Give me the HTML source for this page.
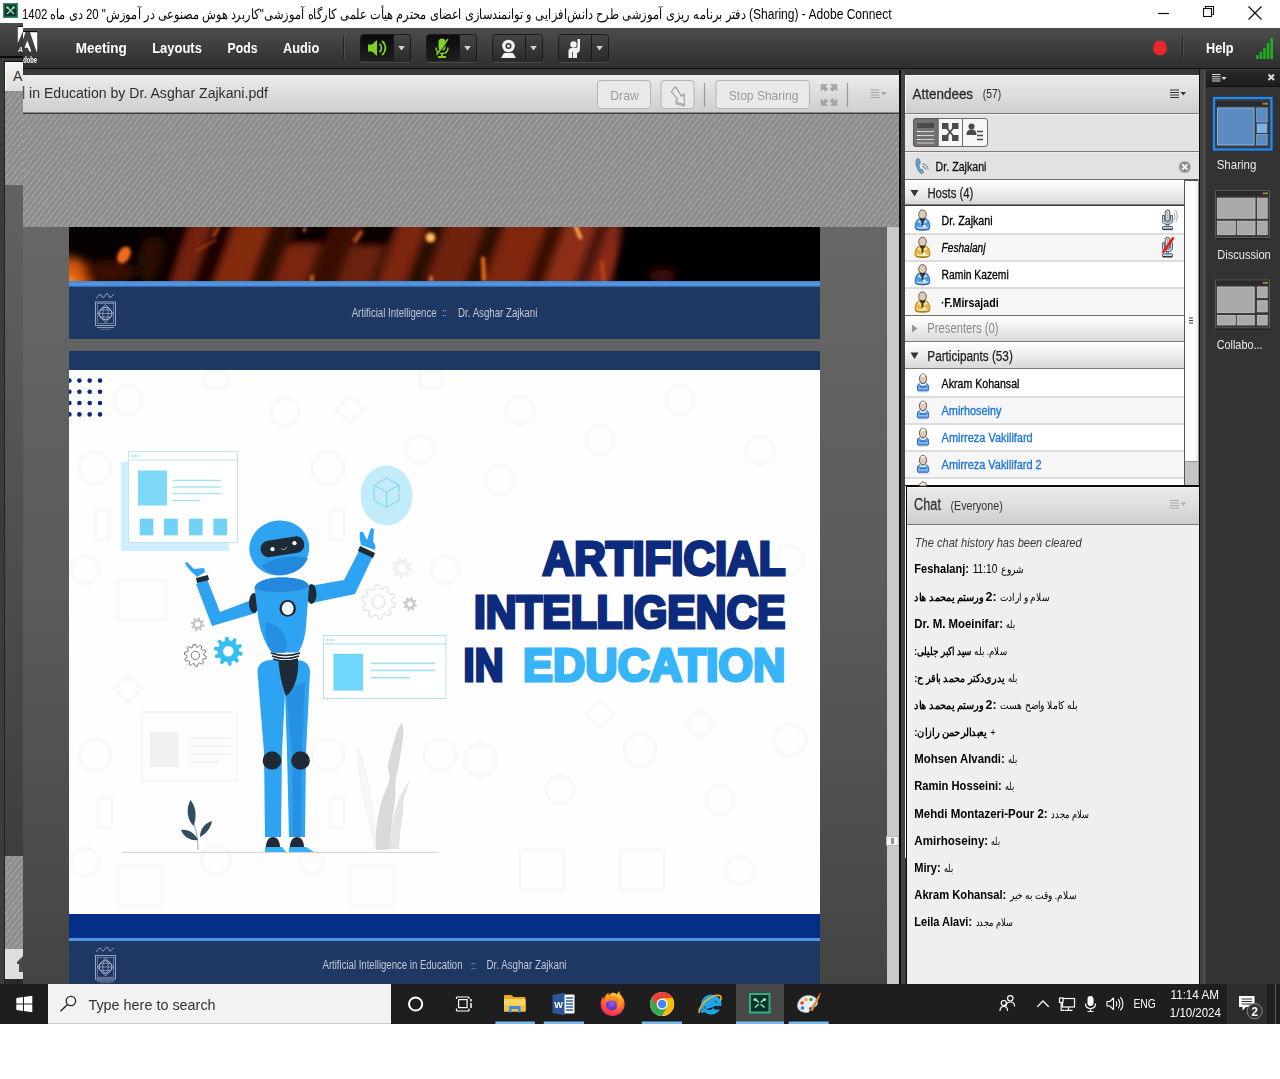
<!DOCTYPE html>
<html>
<head>
<meta charset="utf-8">
<style>
*{box-sizing:border-box;margin:0;padding:0}
html,body{width:1280px;height:1079px;overflow:hidden;background:#fff;font-family:"Liberation Sans",sans-serif;}
.abs{position:absolute}
#root{position:absolute;left:0;top:0;width:1280px;height:1079px;overflow:hidden;background:#fff}
/* title bar */
#title{position:absolute;left:0;top:0;width:1280px;height:28px;background:#fff}
/* app bg */
#app{position:absolute;left:0;top:23px;width:1280px;height:961px;background:#3a3a3a}
/* menu bar */
#menubar{position:absolute;left:23px;top:28px;width:1257px;height:41px;background:linear-gradient(#4d4d4d,#3a3a3a 60%,#2f2f2f);border-bottom:1px solid #111}
/* share pod */
#sharehdr{position:absolute;left:23px;top:75px;width:877px;height:38px;background:linear-gradient(#ececec,#dcdcdc 50%,#cfcfcf);border-bottom:1px solid #8a8a8a}
.hatch{background:#8e8e8e repeating-linear-gradient(128deg,rgba(255,255,255,0) 0 3.6px,rgba(255,255,255,.22) 3.6px 4.5px)}
#sharebody{position:absolute;left:23px;top:227px;width:877px;height:757px;background:linear-gradient(#676767,#5a5a5a 50%,#444)}

/* right panels */
.podhdr{background:linear-gradient(#e9e9e9,#dcdcdc 55%,#cdcdcd)}
.grp{position:absolute;left:905px;width:279px;height:26px;background:linear-gradient(#ffffff,#f4f4f4 35%,#d9d9d9);border-top:1px solid #6f6f6f;border-bottom:1px solid #7d7d7d}
.row{position:absolute;left:905px;width:279px;height:27px;background:#fff;border-bottom:2px solid #dcdcdc}
.row.alt{background:#f6f6f6}
/* taskbar */
#taskbar{position:absolute;left:0;top:984px;width:1280px;height:40px;background:#1e1e1e}
#search{position:absolute;left:48px;top:984px;width:343px;height:40px;background:#f2f2f2;border-bottom:1px solid #c8c8c8}
</style>
</head>
<body>
<div id="root">

<!-- APP BACKGROUND -->
<div id="app"></div>


<!-- LEFT GHOST STRIP (offset window) -->
<div class="abs" style="left:0;top:23px;width:23px;height:33px;background:linear-gradient(#4b4b4b,#333)"></div>
<div class="abs" style="left:0;top:56px;width:23px;height:2px;background:#0c0c0c"></div><div class="abs" style="left:0;top:58px;width:23px;height:4px;background:#3a3a3a"></div><div class="abs" style="left:4px;top:61px;width:19px;height:1px;background:#0c0c0c"></div>
<div class="abs" style="left:0;top:62px;width:5px;height:922px;background:#3c3c3c"></div>
<div class="abs" style="left:4px;top:62px;width:1px;height:922px;background:#222"></div>
<div class="abs" style="left:5px;top:62px;width:18px;height:29px;background:linear-gradient(#f4f4f4,#dedede);border-top:1px solid #fff;border-left:1px solid #fff"><span style="position:absolute;left:7px;top:5px;font-size:14px;color:#333">Al</span></div>
<div class="abs hatch" style="left:5px;top:91px;width:18px;height:94px"></div>
<div class="abs" style="left:5px;top:185px;width:18px;height:671px;background:linear-gradient(#626262,#3e3e3e)"></div>
<div class="abs hatch" style="left:5px;top:856px;width:18px;height:93px"></div>
<div class="abs" style="left:5px;top:949px;width:18px;height:30px;background:#dedede"><svg width="18" height="30" style="position:absolute;left:0;top:0"><path d="M18 7l-6 6v2h2v8h4z" fill="#4a4a4a"/></svg></div>
<div class="abs" style="left:5px;top:979px;width:18px;height:5px;background:#2a2a2a"></div>

<!-- TITLE BAR -->
<div id="title">
  <svg class="abs" style="left:3px;top:3px" width="15" height="15" viewBox="0 0 15 15"><rect x="0" y="0" width="15" height="15" fill="#2e8b6a"/><rect x="1.5" y="1.5" width="12" height="12" fill="#12382c"/><path d="M4 4l7 7M11 4l-7 7" stroke="#8fe0b8" stroke-width="1.4"/><circle cx="4.5" cy="4.5" r="1.3" fill="#8fe0b8"/><circle cx="10.5" cy="4.5" r="1.3" fill="#8fe0b8"/></svg>
  
</div>

<div class="abs" style="left:0;top:23px;width:23px;height:6px;background:linear-gradient(#4e4e4e,#484848)"></div>
<!-- MENU BAR -->
<div id="menubar"></div>

<!-- SHARE POD -->
<div id="sharehdr"></div>
<div class="abs hatch" style="left:23px;top:114px;width:877px;height:113px"></div>
<div id="sharebody"></div>


<!-- SLIDE AREA -->
<div class="abs" style="left:887px;top:227px;width:12px;height:757px;background:#c9c9c9"></div>
<div class="abs" style="left:899px;top:70px;width:2px;height:914px;background:#0a0a0a"></div>
<div class="abs" style="left:901px;top:70px;width:4px;height:914px;background:#444"></div>
<div class="abs" style="left:886px;top:836px;width:13px;height:10px;background:#f4f4f4;border:1px solid #bbb"><svg width="11" height="8" style="position:absolute;left:0;top:0"><path d="M4 2h3M4 4h3M4 6h3" stroke="#333" stroke-width="1"/></svg></div>
<!-- top slide remnant -->
<div class="abs" id="fire" style="left:69px;top:227px;width:751px;height:55px;background:#050101;overflow:hidden">
 <svg width="751" height="55" viewBox="0 0 751 55">
  <defs>
   <filter id="bl" x="-20%" y="-50%" width="140%" height="200%"><feGaussianBlur stdDeviation="5"/></filter>
   <filter id="bl2" x="-50%" y="-50%" width="200%" height="200%"><feGaussianBlur stdDeviation="1.500"/></filter>
   <filter id="bl3" x="-20%" y="-50%" width="140%" height="200%"><feGaussianBlur stdDeviation="3.500"/></filter>
  </defs>
  <rect width="751" height="55" fill="#070101"/>
  <g filter="url(#bl)">
   <rect x="105" y="-10" width="440" height="80" fill="#4c160a"/>
   <ellipse cx="0" cy="52" rx="22" ry="22" fill="#d8560e"/>
   <ellipse cx="-4" cy="58" rx="12" ry="8" fill="#ff9a20"/>
   <ellipse cx="40" cy="45" rx="26" ry="12" fill="#3a0f06"/>
   <ellipse cx="85" cy="35" rx="16" ry="26" fill="#2a0a04"/>
  </g>
  <g filter="url(#bl3)" transform="skewX(-20)">
   <rect x="122" y="-5" width="20" height="70" fill="#742410"/>
   <rect x="104" y="-5" width="14" height="70" fill="#0c0201"/>
   <rect x="146" y="-5" width="16" height="70" fill="#1e0603"/>
   <rect x="166" y="-5" width="34" height="70" fill="#84290f"/>
   <rect x="204" y="-5" width="18" height="70" fill="#2a0904"/>
   <rect x="226" y="18" width="30" height="50" fill="#7a2610"/>
   <rect x="226" y="-5" width="40" height="22" fill="#100302"/>
   <rect x="262" y="-5" width="24" height="70" fill="#381006"/>
   <rect x="290" y="20" width="30" height="50" fill="#6a200e"/>
   <rect x="292" y="-5" width="34" height="24" fill="#0a0201"/>
   <rect x="330" y="-5" width="26" height="70" fill="#7c2610"/>
   <rect x="360" y="-5" width="14" height="70" fill="#260803"/>
   <rect x="378" y="-5" width="36" height="70" fill="#70220f"/>
   <rect x="418" y="-5" width="14" height="70" fill="#2c0a04"/>
   <rect x="436" y="-5" width="40" height="70" fill="#802810"/>
   <rect x="480" y="-5" width="12" height="70" fill="#3a1006"/>
   <rect x="496" y="-5" width="30" height="70" fill="#8c2e13"/>
   <rect x="528" y="-5" width="10" height="70" fill="#4a1408"/>
   <rect x="540" y="-5" width="20" height="70" fill="#8a2c12"/>
  </g>
  <g filter="url(#bl)">
   <rect x="552" y="-10" width="220" height="80" fill="#050101"/>
   <ellipse cx="593" cy="50" rx="12" ry="7" fill="#3c1108"/>
  </g>
  <g filter="url(#bl2)">
   <ellipse cx="55" cy="28" rx="6" ry="9" fill="#f06a1a" transform="rotate(30 55 28)"/>
   <circle cx="361.500" cy="10.600" r="5" fill="#ff9c3c"/>
   <circle cx="361.500" cy="10.600" r="2.800" fill="#ffc878"/>
   <path d="M506 -2l6 14" stroke="#ffb050" stroke-width="3.500"/>
   <path d="M414 30l1 24" stroke="#f07020" stroke-width="4"/>
   <path d="M127 24l20-11" stroke="#b04420" stroke-width="1.500"/>
   <path d="M150 0l-6 10" stroke="#b8481e" stroke-width="3"/>
   <path d="M293 4l-8 11" stroke="#c04c1e" stroke-width="4"/>
   <path d="M236 0l-1 5" stroke="#f08038" stroke-width="2.200"/>
   <path d="M243 48v7" stroke="#f0702a" stroke-width="3"/>
   <path d="M362 49v6" stroke="#f08038" stroke-width="3"/>
   <path d="M533 34l2 21" stroke="#b8441a" stroke-width="3.500"/>
  </g>
 </svg>
</div>
<div class="abs" style="left:69px;top:281px;width:751px;height:6px;background:linear-gradient(#3f86d6,#5a9be0 60%,#2d63ad)"></div>
<div class="abs" style="left:69px;top:287px;width:751px;height:52px;background:#1f3763"></div>
<!-- main slide -->
<div class="abs" style="left:69px;top:351px;width:751px;height:19px;background:#1f3763"></div>
<div class="abs" id="slide" style="left:69px;top:370px;width:751px;height:544px;background:#fefefe;overflow:hidden">
<svg width="751" height="544" viewBox="69 370 751 544" style="position:absolute;left:0;top:0">
<defs><filter id="sb"><feGaussianBlur stdDeviation="0.5"/></filter></defs>
<!-- faint bg icons -->
<g fill="none" stroke="#f8f9fa" stroke-width="4">
 <circle cx="128" cy="400" r="14"/><rect x="205" y="372" width="22" height="16" rx="3"/><circle cx="285" cy="412" r="14"/><path d="M350 395l14 14-14 14-14-14z"/>
 <circle cx="95" cy="468" r="16"/><circle cx="328" cy="468" r="16"/><rect x="95" y="510" width="14" height="30" rx="3"/><rect x="330" y="510" width="14" height="30" rx="3"/>
 <circle cx="85" cy="570" r="14"/><rect x="118" y="580" width="48" height="40" rx="4"/><circle cx="420" cy="450" r="14"/><rect x="420" y="372" width="22" height="16" rx="3"/>
 <circle cx="95" cy="755" r="16"/><circle cx="328" cy="755" r="16"/><rect x="98" y="798" width="14" height="30" rx="3"/><rect x="330" y="798" width="14" height="30" rx="3"/>
 <circle cx="85" cy="862" r="14"/><rect x="118" y="866" width="44" height="40" rx="4"/><circle cx="216" cy="860" r="14"/><circle cx="312" cy="862" r="12"/><rect x="350" y="866" width="44" height="40" rx="4"/>
 <path d="M128 675l14 14-14 14-14-14z"/><path d="M360 675l14 14-14 14-14-14z"/><circle cx="440" cy="755" r="16"/><circle cx="445" cy="570" r="14"/>
 <circle cx="520" cy="410" r="14"/><circle cx="600" cy="440" r="14"/><circle cx="680" cy="400" r="14"/><circle cx="760" cy="450" r="14"/>
 <circle cx="500" cy="480" r="14"/><circle cx="790" cy="560" r="14"/><circle cx="480" cy="760" r="16"/><circle cx="560" cy="790" r="14"/><circle cx="640" cy="750" r="16"/><circle cx="720" cy="800" r="14"/><circle cx="790" cy="740" r="16"/>
 <rect x="520" y="850" width="44" height="40" rx="4"/><rect x="620" y="850" width="44" height="40" rx="4"/><circle cx="740" cy="870" r="14"/>
 <path d="M600 700l14 14-14 14-14-14z"/><path d="M700 710l14 14-14 14-14-14z"/>
</g>
<circle cx="69.4" cy="380.6" r="2.3" fill="#0c2a7a"/><circle cx="69.4" cy="391.8" r="2.3" fill="#0c2a7a"/><circle cx="69.4" cy="403.0" r="2.3" fill="#0c2a7a"/><circle cx="69.4" cy="414.4" r="2.3" fill="#0c2a7a"/><circle cx="79.4" cy="380.6" r="2.3" fill="#0c2a7a"/><circle cx="79.4" cy="391.8" r="2.3" fill="#0c2a7a"/><circle cx="79.4" cy="403.0" r="2.3" fill="#0c2a7a"/><circle cx="79.4" cy="414.4" r="2.3" fill="#0c2a7a"/><circle cx="89.7" cy="380.6" r="2.3" fill="#0c2a7a"/><circle cx="89.7" cy="391.8" r="2.3" fill="#0c2a7a"/><circle cx="89.7" cy="403.0" r="2.3" fill="#0c2a7a"/><circle cx="89.7" cy="414.4" r="2.3" fill="#0c2a7a"/><circle cx="100.0" cy="380.6" r="2.3" fill="#0c2a7a"/><circle cx="100.0" cy="391.8" r="2.3" fill="#0c2a7a"/><circle cx="100.0" cy="403.0" r="2.3" fill="#0c2a7a"/><circle cx="100.0" cy="414.4" r="2.3" fill="#0c2a7a"/>
<!-- faint gray panel -->
<rect x="142" y="712" width="95" height="69" fill="#fdfdfd" stroke="#efefef" stroke-width="1"/>
<rect x="150" y="732" width="29" height="35" fill="#f1f1f1"/>
<path d="M191 738h40M191 746h40M191 754h40M191 762h28" stroke="#f2f2f2" stroke-width="2"/>
<!-- panel 1 -->
<rect x="121" y="462" width="108" height="89" fill="#cdeefb"/>
<rect x="128.5" y="451.5" width="109" height="91" fill="#fff" stroke="#bfe6f6" stroke-width="1"/>
<path d="M129 460h108" stroke="#bfe6f6" stroke-width="1.2"/>
<path d="M131.5 456h7" stroke="#7fd0ee" stroke-width="1.4" stroke-dasharray="1.6 1"/>
<rect x="138" y="470.5" width="29" height="35" fill="#80d8f8"/>
<path d="M172.5 480.5h48.5M172.5 487h48.5M172.5 493.7h48.5M172.5 500.3h28" stroke="#a7e3f2" stroke-width="1.3"/>
<rect x="139.7" y="518.7" width="13.6" height="16.6" fill="#6fd2f6"/><rect x="164" y="518.7" width="13.8" height="16.6" fill="#6fd2f6"/><rect x="189" y="518.7" width="13.6" height="16.6" fill="#6fd2f6"/><rect x="213.4" y="518.7" width="13.6" height="16.6" fill="#6fd2f6"/>
<!-- circle w/ cube -->
<ellipse cx="386.5" cy="495.5" rx="26" ry="30" fill="#c3ecfb"/>
<path d="M386.5 478l12.5 7v15.5l-12.5 7-12.5-7V485zM374 485l12.5 7 12.5-7M386.5 492v15.5" fill="none" stroke="#7fd3e8" stroke-width="1"/>
<!-- panel 2 -->
<rect x="323.5" y="635.5" width="122.5" height="63" fill="#fff" stroke="#b7e1ee" stroke-width="1"/>
<path d="M324 643.8h122" stroke="#b7e1ee" stroke-width="1.2"/>
<path d="M326.5 640h7" stroke="#7fd0ee" stroke-width="1.4" stroke-dasharray="1.6 1"/>
<rect x="333.4" y="653.8" width="29.6" height="36.8" fill="#6fd8fa"/>
<path d="M371 663.4h64M371 670.4h64M371 677.6h39" stroke="#a5e3ee" stroke-width="1.6"/>
<!-- gears -->
<path d="M392.0 602.0 L395.4 603.6 L394.7 607.3 L390.9 607.4 L389.4 609.9 L391.3 613.2 L388.5 615.8 L385.4 613.6 L382.7 614.8 L382.2 618.6 L378.5 619.0 L377.2 615.4 L374.3 614.8 L371.7 617.6 L368.5 615.8 L369.6 612.1 L367.6 609.9 L363.9 610.7 L362.3 607.3 L365.3 604.9 L365.0 602.0 L361.6 600.4 L362.3 596.7 L366.1 596.6 L367.6 594.1 L365.7 590.8 L368.5 588.2 L371.6 590.4 L374.3 589.2 L374.8 585.4 L378.5 585.0 L379.8 588.6 L382.7 589.2 L385.3 586.4 L388.5 588.2 L387.4 591.9 L389.4 594.1 L393.1 593.3 L394.7 596.7 L391.7 599.1Z M372.0 602.0 a6.5 6.5 0 1 0 13.0 0 a6.5 6.5 0 1 0 -13.0 0Z" fill="#fdfdfd" stroke="#e4e4e4" stroke-width="1.2" fill-rule="evenodd"/>
<path d="M410.0 568.0 L412.9 569.1 L412.3 571.8 L409.2 571.5 L408.1 573.1 L409.6 575.9 L407.5 577.5 L405.3 575.3 L403.4 575.9 L402.8 579.0 L400.1 578.8 L399.8 575.7 L398.0 574.9 L395.5 576.9 L393.6 575.1 L395.4 572.5 L394.5 570.7 L391.3 570.7 L391.0 568.0 L394.0 567.2 L394.5 565.3 L392.1 563.2 L393.6 560.9 L396.4 562.2 L398.0 561.1 L397.5 558.0 L400.1 557.2 L401.4 560.0 L403.4 560.1 L405.0 557.4 L407.5 558.5 L406.7 561.5 L408.1 562.9 L411.1 561.8 L412.3 564.2 L409.8 566.1Z M398.0 568.0 a4.0 4.0 0 1 0 8.0 0 a4.0 4.0 0 1 0 -8.0 0Z" fill="#f1f1f1" fill-rule="evenodd"/>
<path d="M415.0 604.0 L417.0 604.8 L416.5 606.7 L414.4 606.4 L413.5 607.5 L414.3 609.5 L412.7 610.5 L411.4 608.8 L410.0 609.0 L409.2 611.0 L407.3 610.5 L407.6 608.4 L406.5 607.5 L404.5 608.3 L403.5 606.7 L405.2 605.4 L405.0 604.0 L403.0 603.2 L403.5 601.3 L405.6 601.6 L406.5 600.5 L405.7 598.5 L407.3 597.5 L408.6 599.2 L410.0 599.0 L410.8 597.0 L412.7 597.5 L412.4 599.6 L413.5 600.5 L415.5 599.7 L416.5 601.3 L414.8 602.6Z M407.4 604.0 a2.6 2.6 0 1 0 5.2 0 a2.6 2.6 0 1 0 -5.2 0Z" fill="#c9c9c9" fill-rule="evenodd"/>
<path d="M202.6 624.3 L204.6 625.1 L204.1 627.0 L202.0 626.7 L201.1 627.8 L201.9 629.8 L200.3 630.8 L199.0 629.1 L197.6 629.3 L196.8 631.3 L194.9 630.8 L195.2 628.7 L194.1 627.8 L192.1 628.6 L191.1 627.0 L192.8 625.7 L192.6 624.3 L190.6 623.5 L191.1 621.6 L193.2 621.9 L194.1 620.8 L193.3 618.8 L194.9 617.8 L196.2 619.5 L197.6 619.3 L198.4 617.3 L200.3 617.8 L200.0 619.9 L201.1 620.8 L203.1 620.0 L204.1 621.6 L202.4 622.9Z M195.0 624.3 a2.6 2.6 0 1 0 5.2 0 a2.6 2.6 0 1 0 -5.2 0Z" fill="#c6c6c6" fill-rule="evenodd"/>
<path d="M204.0 655.4 L206.4 656.4 L205.9 658.8 L203.3 658.8 L202.4 660.5 L203.7 662.7 L201.9 664.3 L199.8 662.8 L198.1 663.6 L197.8 666.1 L195.4 666.4 L194.6 664.0 L192.7 663.6 L191.0 665.5 L188.9 664.3 L189.7 661.9 L188.4 660.5 L185.9 661.0 L184.9 658.8 L187.0 657.3 L186.8 655.4 L184.4 654.4 L184.9 652.0 L187.5 652.0 L188.4 650.3 L187.1 648.1 L188.9 646.5 L191.0 648.0 L192.7 647.2 L193.0 644.7 L195.4 644.4 L196.2 646.8 L198.1 647.2 L199.8 645.3 L201.9 646.5 L201.1 648.9 L202.4 650.3 L204.9 649.8 L205.9 652.0 L203.8 653.5Z M191.2 655.4 a4.2 4.2 0 1 0 8.4 0 a4.2 4.2 0 1 0 -8.4 0Z" fill="#fff" stroke="#6b6b6b" stroke-width="0.9" fill-rule="evenodd"/>
<path d="M239.1 651.2 L242.7 652.6 L242.1 655.7 L238.2 655.5 L237.0 657.5 L239.2 660.8 L236.8 662.9 L233.8 660.5 L231.6 661.5 L231.5 665.4 L228.3 665.7 L227.3 662.0 L225.0 661.5 L222.5 664.5 L219.8 662.9 L221.2 659.3 L219.6 657.5 L215.8 658.6 L214.5 655.7 L217.8 653.6 L217.5 651.2 L213.9 649.8 L214.5 646.7 L218.4 646.9 L219.6 644.9 L217.4 641.6 L219.8 639.5 L222.8 641.9 L225.0 640.9 L225.1 637.0 L228.3 636.7 L229.3 640.4 L231.6 640.9 L234.1 637.9 L236.8 639.5 L235.4 643.1 L237.0 644.9 L240.8 643.8 L242.1 646.7 L238.8 648.8Z M223.1 651.2 a5.2 5.2 0 1 0 10.4 0 a5.2 5.2 0 1 0 -10.4 0Z" fill="#35bdf4" fill-rule="evenodd"/>
<!-- gray plant -->
<path d="M409.500 779.500c-1 7-4 13-5.500 18-1 6-.5 11-1 16-1 8-2.500 15-3 22-.3 5-.8 9-1.200 13.500h-10c1-9 2.500-18 3.500-26 1.500-9 4-17 7-25 3-6 7-12 10.200-18.500z" fill="#e4e4e4"/>
<path d="M401.700 722.800c2 4 2 9 1.500 13.400-1 9-2.700 18-3.900 26.800-1.200 7-3.500 13-3.900 18.900-.3 5 .3 10 0 15.700-.5 8-2.500 15-3.200 22.100-.8 10-2.200 20-3.200 30h-13.300c-.5-5-.5-10 0-15.700 1-11 3-22 5.500-31.500 2-8 6-14 7.800-20.500 1.500-5 .5-9 -1.500-14.200 1.500-10 5-20 7.900-31.500 2-6 4.300-11 6.300-13.400z" fill="#d9d9d9"/>
<path d="M357.600 748.800c4 8 7 18 9 28 3 14 5 26 6.500 38 1.200 10 2 22 2.600 34.800-3-11-5-22-7.500-33-3-13-6-25-8-37-1.200-9-2.200-20-2.600-30.800z" fill="#f7f7f7" stroke="#ededed" stroke-width=".7"/>
<!-- dark plant -->
<path d="M198 850c0-14-3-26-8-36" stroke="#8a8a8a" stroke-width=".8" fill="none"/>
<path d="M190.5 800c5 6 7 16 3 26-6-6-8-17-3-26zM212 821c-1 7-6 13-12 16 0-8 5-14 12-16zM181 830c7-1 14 3 17 10-8 1-14-3-17-10z" fill="#2f4f5e"/>
<!-- ground -->
<path d="M122 852.400h316.500" stroke="#d0d0d0" stroke-width="1"/>
<!-- ROBOT -->
<g>
 <!-- right arm (viewer right) -->
 <path d="M310 586l34-6 17-33 13 7-19 40-43 9z" fill="#2ea3f2"/>
 <path d="M361 545c-1-5-2-9-1-13l3 0 4 8 4-12 3 1-1 13c2 1 3 4 2 8z" fill="#2ea3f2"/>
 <path d="M360 546l15 7-2 5-15-7z" fill="#1e2a36"/>
 <!-- left arm -->
 <path d="M254 599l-34 13-13-33-11 5 16 42 44-13z" fill="#2ea3f2"/>
 <path d="M197 577c-4-4-10-9-12-14l2-1 7 7 10-1 1 4z" fill="#2ea3f2"/>
 <path d="M196 578l12-3 1 5-12 3z" fill="#1e2a36"/>
 <!-- shoulders -->
 <ellipse cx="254" cy="603" rx="5" ry="10" fill="#1e2a36"/>
 <ellipse cx="311.5" cy="594" rx="5" ry="10" fill="#1e2a36"/>
 <!-- legs -->
 <path d="M257.5 672c0-8 6-12 14-12h25c8 0 13.500 4 13.500 12l-4 80-1 85h-16l-2-85-2-60-3 60-1 85h-16l-1-85z" fill="#2ea3f2"/>
 <path d="M286 690l6 62 1 85h8l1-85 3-70z" fill="#2389dd" opacity=".7"/>
 <path d="M278.500 660h19.500c1 14-3 30-12 36-4-10-7-24-7.500-36z" fill="#1e2a36"/>
 <circle cx="272" cy="760.500" r="9.300" fill="#1e2a36"/><circle cx="300.500" cy="760.500" r="9.300" fill="#1e2a36"/>
 <path d="M266 847c0-6 3-10 7-10s7 4 7 10zM290 847c0-6 3-10 7-10s7 4 7 10z" fill="#1e2a36"/>
 <path d="M265 847h17l4 5h-21zM289 847h17l8 5h-25z" fill="#38b0f6"/>
 <!-- neck coils -->
 <path d="M271 653q14 5 29 0M272 656q13 5 27 0M273 659q12 4 25 0" stroke="#1e2a36" stroke-width="1.4" fill="none"/>
 <!-- body -->
 <path d="M254.500 588c2-8 16-10.500 28-10.500s25 2 26.500 9l-3 40c-1 12-4 20-8 26h-26c-7-8-12-22-14-36z" fill="#2ea3f2"/>
 <path d="M254.500 588c2-8 16-10.500 28-10.500s25 2 26.500 9c-8 6-45 8-54.500 1.500z" fill="#2389dd"/>
 <path d="M266 622c10 2 18 8 20 18 2 6 0 10-2 13h-12c-5-8-8-20-6-31z" fill="#2389dd" opacity=".75"/>
 <circle cx="287.700" cy="608.400" r="8.300" fill="#1e2a36"/><ellipse cx="287.700" cy="608.400" rx="5.800" ry="6.600" fill="#fff"/><ellipse cx="287.700" cy="608.400" rx="3" ry="4" fill="none" stroke="#cfe6ee" stroke-width="1"/>
 <!-- head -->
 <ellipse cx="279.300" cy="548" rx="30" ry="27.500" fill="#2ea3f2" transform="rotate(-8 279.300 548)"/>
 <path d="M262 566c8-8 30-12 46-8-4 10-14 17-28 17-8 0-14-3-18-9z" fill="#2389dd"/>
 <rect x="260.500" y="538.500" width="44" height="16.500" rx="8" fill="#1e2a36" transform="rotate(-9 282.500 547)"/>
 <circle cx="272.500" cy="549.200" r="2.100" fill="#fff"/><circle cx="294.500" cy="543.200" r="2.100" fill="#fff"/>
 <path d="M281 548.500q3 3 6-1.500" stroke="#9fb0bf" stroke-width=".9" fill="none"/>
</g>
<!-- TITLE -->
<g font-family="Liberation Sans, sans-serif" font-weight="bold" stroke-linejoin="miter">
 <text x="542.600" y="574.900" font-size="47.500" textLength="242.800" lengthAdjust="spacingAndGlyphs" fill="#0d2b7d" stroke="#0d2b7d" stroke-width="3.200">ARTIFICIAL</text>
 <text x="473.900" y="627.800" font-size="46.500" textLength="311.500" lengthAdjust="spacingAndGlyphs" fill="#0d2b7d" stroke="#0d2b7d" stroke-width="3.200">INTELLIGENCE</text>
 <text x="463.600" y="681.400" font-size="46.500" textLength="39.800" lengthAdjust="spacingAndGlyphs" fill="#0d2b7d" stroke="#0d2b7d" stroke-width="3.200">IN</text>
 <text x="523.100" y="681.400" font-size="46.500" textLength="262.300" lengthAdjust="spacingAndGlyphs" fill="#38b4fb" stroke="#38b4fb" stroke-width="3.200">EDUCATION</text>
</g>
</svg>
</div>
<div class="abs" style="left:69px;top:914px;width:751px;height:24px;background:#032f86"></div>
<div class="abs" style="left:69px;top:938px;width:751px;height:3px;background:#4c97e6"></div>
<div class="abs" style="left:69px;top:941px;width:751px;height:43px;background:#1f3763"></div>


<!-- FOOT_START -->
<svg class="abs" style="left:0;top:0;pointer-events:none;will-change:transform" width="1280" height="1079" viewBox="0 0 1280 1079" font-family="Liberation Sans, sans-serif">
<text x="351.7" y="316.6" font-size="12" font-weight="normal" font-style="normal" fill="#c0c8d6" textLength="84.9" lengthAdjust="spacingAndGlyphs" >Artificial Intelligence</text>
<text x="441.9" y="316.2" font-size="11" font-weight="normal" font-style="normal" fill="#c0c8d6" textLength="4.9" lengthAdjust="spacingAndGlyphs" >::</text>
<text x="458.1" y="316.6" font-size="12" font-weight="normal" font-style="normal" fill="#c0c8d6" textLength="79.2" lengthAdjust="spacingAndGlyphs" >Dr. Asghar Zajkani</text>
<g transform="translate(95,292)" fill="none" stroke="#b9c3d6" stroke-width=".8"><path d="M1 6.500c2-1 2-4 4-4s1 3 3 3 2-4 4-4 1 4 3 4 2-3 4-3" stroke-width=".9" opacity=".8"/><rect x=".5" y="10" width="20" height="23.500"/><rect x="2.200" y="11.700" width="16.600" height="20" stroke-width=".5"/><circle cx="10.500" cy="21.500" r="6.300"/><ellipse cx="10.500" cy="21.500" rx="2.800" ry="6.300" stroke-width=".6"/><path d="M4.200 21.500h12.600M5 18h11M5 25h11" stroke-width=".6"/><path d="M10.500 12.500l8 9-8 9-8-9z" stroke-width=".7"/><path d="M2 35.500h17" stroke-width="1" opacity=".7"/><path d="M5 37.300h11" stroke-width=".6" opacity=".6"/></g>
<text x="322.5" y="969.2" font-size="12" font-weight="normal" font-style="normal" fill="#c0c8d6" textLength="140.0" lengthAdjust="spacingAndGlyphs" >Artificial Intelligence in Education</text>
<text x="471.0" y="968.8" font-size="11" font-weight="normal" font-style="normal" fill="#c0c8d6" textLength="4.5" lengthAdjust="spacingAndGlyphs" >::</text>
<text x="486.5" y="969.2" font-size="12" font-weight="normal" font-style="normal" fill="#c0c8d6" textLength="80.0" lengthAdjust="spacingAndGlyphs" >Dr. Asghar Zajkani</text>
<g transform="translate(95,945.5)" fill="none" stroke="#b9c3d6" stroke-width=".8"><path d="M1 6.500c2-1 2-4 4-4s1 3 3 3 2-4 4-4 1 4 3 4 2-3 4-3" stroke-width=".9" opacity=".8"/><rect x=".5" y="10" width="20" height="23.500"/><rect x="2.200" y="11.700" width="16.600" height="20" stroke-width=".5"/><circle cx="10.500" cy="21.500" r="6.300"/><ellipse cx="10.500" cy="21.500" rx="2.800" ry="6.300" stroke-width=".6"/><path d="M4.200 21.500h12.600M5 18h11M5 25h11" stroke-width=".6"/><path d="M10.500 12.500l8 9-8 9-8-9z" stroke-width=".7"/><path d="M2 35.500h17" stroke-width="1" opacity=".7"/><path d="M5 37.300h11" stroke-width=".6" opacity=".6"/></g>
</svg>
<!-- FOOT_END -->
<!-- gap & frames -->
<div class="abs" style="left:1199px;top:70px;width:7px;height:914px;background:#434343"></div><div class="abs" style="left:1199px;top:70px;width:1px;height:914px;background:#0a0a0a"></div>
<div class="abs" style="left:1204px;top:70px;width:1px;height:914px;background:#5a5a5a"></div><div class="abs" style="left:1205px;top:70px;width:1px;height:914px;background:#383838"></div>
<!-- ATTENDEES POD -->
<div class="abs podhdr" style="left:905px;top:75px;width:294px;height:38px;border-top:1px solid #f8f8f8;border-left:1px solid #f4f4f4"></div>
<div class="abs" style="left:905px;top:113px;width:294px;height:1px;background:#7b7b7b"></div>
<div class="abs" style="left:905px;top:114px;width:294px;height:37px;background:#e3e3e3;border-top:1px solid #f2f2f2"></div>
<div class="abs" style="left:905px;top:151px;width:294px;height:1px;background:#7b7b7b"></div>
<div class="abs" style="left:905px;top:152px;width:294px;height:27px;background:#e2e2e2;border-top:1px solid #f2f2f2"></div>
<!-- scrollbar of attendee list -->
<div class="abs" style="left:1184px;top:179px;width:15px;height:307px;background:linear-gradient(90deg,#fff,#fff 9px,#e2e2e2);border-left:1px solid #555;border-top:2px solid #555"></div>
<div class="abs" style="left:1185px;top:461px;width:14px;height:25px;background:#c4c4c4;border-top:1px solid #999"></div>
<div class="abs" style="left:1198px;top:179px;width:1px;height:307px;background:#9a9a9a"></div>
<svg class="abs" style="left:1188px;top:317px" width="6" height="7"><path d="M1 1h4M1 3.500h4M1 6h4" stroke="#333" stroke-width="1"/></svg>
<!-- groups -->
<div class="grp" style="top:179px"></div>
<div class="row" style="top:206px;height:29px"></div>
<div class="row alt" style="top:235px;height:27px"></div>
<div class="row" style="top:262px;height:27px"></div>
<div class="row alt" style="top:289px;height:26px;border-bottom:none"></div>
<div class="grp" style="top:315px;height:27px"></div>
<div class="grp" style="top:342px;height:27px;border-top:none"></div>
<div class="row" style="top:369px;height:29px"></div>
<div class="row alt" style="top:398px;height:27px"></div>
<div class="row" style="top:425px;height:27px"></div>
<div class="row alt" style="top:452px;height:27px"></div>
<div class="row" style="top:479px;height:7px;border-bottom:none"></div>
<!-- CHAT POD -->
<div class="abs" style="left:905px;top:485px;width:294px;height:499px;background:#0a0a0a"></div><div class="abs" style="left:905px;top:486px;width:1px;height:372px;background:#f4f4f4"></div><div class="abs" style="left:905px;top:858px;width:1px;height:126px;background:#333"></div>
<div class="abs podhdr" style="left:907px;top:487px;width:292px;height:37px;border-top:1px solid #f6f6f6"></div>
<div class="abs" style="left:907px;top:524px;width:292px;height:1px;background:#7b7b7b"></div>
<div class="abs" style="left:907px;top:525px;width:292px;height:459px;background:#efefef"></div>


<!-- LAYOUT BAR -->
<div class="abs" style="left:1206px;top:70px;width:74px;height:914px;background:#333"></div>
<div class="abs" style="left:1206px;top:70px;width:74px;height:17px;background:linear-gradient(#2a2a2a,#1c1c1c);border-bottom:1px solid #111"></div>

<!-- OVERLAY_RIGHT_START -->
<svg class="abs" style="left:0;top:0;pointer-events:none;will-change:transform" width="1280" height="1079" viewBox="0 0 1280 1079" font-family="Liberation Sans, sans-serif">
<text x="912.6" y="98.6" font-size="15.5" font-weight="normal" font-style="normal" fill="#2b2b2b" textLength="60.5" lengthAdjust="spacingAndGlyphs"  stroke="#2b2b2b" stroke-width="0.3">Attendees</text>
<text x="982.8" y="98.2" font-size="12" font-weight="normal" font-style="normal" fill="#2b2b2b" textLength="18.4" lengthAdjust="spacingAndGlyphs" >(57)</text>
<path d="M1170 90h9M1170 92.500h9M1170 95h9M1170 97.500h9" stroke="#333" stroke-width="1"/><path d="M1180.500 92h5.500l-2.750 3.500z" fill="#333"/>
<rect x="913.5" y="118.5" width="74" height="28" rx="2.500" fill="#f6f6f6" stroke="#6a6a6a"/>
<path d="M913.5 121a2.500 2.500 0 0 1 2.500-2.500h22v28h-22a2.500 2.500 0 0 1-2.500-2.500z" fill="#727272" stroke="#5a5a5a"/>
<path d="M938 118.500v28M962.500 118.500v28" stroke="#6a6a6a"/>
<rect x="917" y="123" width="17" height="5" fill="#4a4a4a"/><path d="M917 131.500h17M917 135.500h17M917 139.500h17M917 143h17" stroke="#d0d0d0" stroke-width="1.2"/><path d="M917 131.500h3M917 135.500h3M917 139.500h3" stroke="#eee" stroke-width="1.2"/>
<g fill="#4a4a4a"><rect x="942" y="123" width="6.5" height="6"/><rect x="952" y="123" width="6.5" height="6"/><rect x="942" y="135" width="6.5" height="6"/><rect x="952" y="135" width="6.5" height="6"/></g><path d="M945 126l10 12M955 126l-10 12" stroke="#4a4a4a" stroke-width="1.8"/>
<circle cx="971.5" cy="126.500" r="3" fill="#4a4a4a"/><path d="M966.500 135c0-4 2-5.500 5-5.500s5 1.500 5 5.500z" fill="#4a4a4a"/><path d="M977 131.500h6M977 135.500h6M977 139.500h6" stroke="#4a4a4a" stroke-width="1.3"/>
<path d="M917.500 158.500c-1.500 1-2 4-1 7.500s3 7 5 7.500l2-1-1.200-3-1.500.4c-1-1-2-4-2-6l1.500-.7-.8-3.600z" fill="#6aa5d8" stroke="#2f5f8f" stroke-width=".7"/><path d="M922.500 166.500a3 3 0 0 1 3 3M922.500 164a5.500 5.500 0 0 1 5.500 5.500" stroke="#666" stroke-width="1" fill="none"/>
<text x="935.6" y="170.6" font-size="12.5" font-weight="normal" font-style="normal" fill="#111" textLength="50.9" lengthAdjust="spacingAndGlyphs"  stroke="#111" stroke-width="0.3">Dr. Zajkani</text>
<circle cx="1184.800" cy="167" r="6" fill="#8b8b8b" stroke="#c8c8c8" stroke-width="1.2"/><path d="M1182.200 164.400l5.200 5.200M1187.400 164.400l-5.200 5.200" stroke="#fff" stroke-width="1.800"/>
<path d="M910.5 190h8l-4 6.5z" fill="#333"/>
<text x="927.4" y="197.9" font-size="14" font-weight="normal" font-style="normal" fill="#222" textLength="46.0" lengthAdjust="spacingAndGlyphs"  stroke="#222" stroke-width="0.25">Hosts (4)</text>
<path d="M912 324.5v8l5.500-4z" fill="#999"/>
<text x="927.3" y="333.4" font-size="14" font-weight="normal" font-style="normal" fill="#8a8a8a" textLength="71.3" lengthAdjust="spacingAndGlyphs" >Presenters (0)</text>
<path d="M910.5 352.5h8l-4 6.5z" fill="#333"/>
<text x="927.3" y="361.0" font-size="14" font-weight="normal" font-style="normal" fill="#222" textLength="85.5" lengthAdjust="spacingAndGlyphs"  stroke="#222" stroke-width="0.25">Participants (53)</text>
<g transform="translate(914.5,209)"><path d="M.7 19.500c-.4-4.500 1-8 3-9.300l2.300-1.400h4l2.300 1.400c2 1.300 3.400 4.800 3 9.300-3 1.500-11.600 1.500-14.600 0z" fill="#4f9be8" stroke="#2b62b0" stroke-width=".9"/><path d="M2.200 18.300c2.500 1.200 9.100 1.200 11.600 0" stroke="#fff" stroke-width="1.200" fill="none" opacity=".8"/><path d="M3 12.500l2.500-1.500 1 4M13 12.500l-2.500-1.500-1 4" fill="#fff" opacity=".7"/><path d="M1.500 20.200c3 1.300 10 1.300 13 0" stroke="#2b62b0" stroke-width="1.200" fill="none"/><ellipse cx="8" cy="5.600" rx="3.800" ry="4.700" fill="#dccdb4" stroke="#5c4e42" stroke-width=".9"/><path d="M6 8.500c1 1.200 3 1.200 4 0l.5 2.500-1.700 1.300v4.500h-1.600v-4.500l-1.700-1.300z" fill="#33312f"/><rect x="8.300" y="16" width="3" height="2.600" rx=".6" fill="#f4ece0"/></g>
<text x="941.6" y="224.9" font-size="12.5" font-weight="normal" font-style="normal" fill="#000" textLength="51.0" lengthAdjust="spacingAndGlyphs"  stroke="#000" stroke-width="0.3">Dr. Zajkani</text>
<g transform="translate(914.5,236.3)"><path d="M.7 19.500c-.4-4.500 1-8 3-9.300l2.300-1.400h4l2.300 1.400c2 1.300 3.400 4.800 3 9.300-3 1.500-11.600 1.500-14.600 0z" fill="#e9b739" stroke="#a97a12" stroke-width=".9"/><path d="M2.200 18.300c2.500 1.200 9.100 1.200 11.600 0" stroke="#fff" stroke-width="1.200" fill="none" opacity=".8"/><path d="M3 12.500l2.500-1.500 1 4M13 12.500l-2.500-1.500-1 4" fill="#fff" opacity=".7"/><path d="M1.500 20.200c3 1.300 10 1.300 13 0" stroke="#a97a12" stroke-width="1.200" fill="none"/><ellipse cx="8" cy="5.600" rx="3.800" ry="4.700" fill="#dccdb4" stroke="#5c4e42" stroke-width=".9"/><path d="M6 8.500c1 1.200 3 1.200 4 0l.5 2.500-1.700 1.300v4.500h-1.600v-4.500l-1.700-1.300z" fill="#33312f"/><rect x="8.300" y="16" width="3" height="2.600" rx=".6" fill="#f4ece0"/></g>
<text x="941.6" y="251.6" font-size="12.5" font-weight="normal" font-style="italic" fill="#000" textLength="43.9" lengthAdjust="spacingAndGlyphs"  stroke="#000" stroke-width="0.3">Feshalanj</text>
<g transform="translate(914.5,263.6)"><path d="M.7 19.500c-.4-4.500 1-8 3-9.300l2.300-1.400h4l2.300 1.400c2 1.300 3.400 4.800 3 9.300-3 1.500-11.600 1.500-14.600 0z" fill="#4f9be8" stroke="#2b62b0" stroke-width=".9"/><path d="M2.200 18.300c2.500 1.200 9.100 1.200 11.600 0" stroke="#fff" stroke-width="1.200" fill="none" opacity=".8"/><path d="M3 12.500l2.500-1.500 1 4M13 12.500l-2.500-1.500-1 4" fill="#fff" opacity=".7"/><path d="M1.500 20.200c3 1.300 10 1.300 13 0" stroke="#2b62b0" stroke-width="1.200" fill="none"/><ellipse cx="8" cy="5.600" rx="3.800" ry="4.700" fill="#dccdb4" stroke="#5c4e42" stroke-width=".9"/><path d="M6 8.500c1 1.200 3 1.200 4 0l.5 2.500-1.700 1.300v4.500h-1.600v-4.500l-1.700-1.300z" fill="#33312f"/><rect x="8.300" y="16" width="3" height="2.600" rx=".6" fill="#f4ece0"/></g>
<text x="941.6" y="278.9" font-size="12.5" font-weight="normal" font-style="normal" fill="#000" textLength="67.1" lengthAdjust="spacingAndGlyphs"  stroke="#000" stroke-width="0.3">Ramin Kazemi</text>
<g transform="translate(914.5,291)"><path d="M.7 19.500c-.4-4.500 1-8 3-9.300l2.300-1.400h4l2.300 1.400c2 1.300 3.400 4.800 3 9.300-3 1.500-11.600 1.500-14.600 0z" fill="#e9b739" stroke="#a97a12" stroke-width=".9"/><path d="M2.200 18.300c2.500 1.200 9.100 1.200 11.600 0" stroke="#fff" stroke-width="1.200" fill="none" opacity=".8"/><path d="M3 12.500l2.500-1.500 1 4M13 12.500l-2.500-1.500-1 4" fill="#fff" opacity=".7"/><path d="M1.500 20.200c3 1.300 10 1.300 13 0" stroke="#a97a12" stroke-width="1.200" fill="none"/><ellipse cx="8" cy="5.600" rx="3.800" ry="4.700" fill="#dccdb4" stroke="#5c4e42" stroke-width=".9"/><path d="M6 8.500c1 1.200 3 1.200 4 0l.5 2.500-1.700 1.300v4.500h-1.600v-4.500l-1.700-1.300z" fill="#33312f"/><rect x="8.300" y="16" width="3" height="2.600" rx=".6" fill="#f4ece0"/></g>
<circle cx="942.500" cy="302.800" r="1" fill="#333"/>
<text x="944.3" y="306.5" font-size="12" font-weight="bold" font-style="normal" fill="#000" textLength="54.3" lengthAdjust="spacingAndGlyphs" >F.Mirsajadi</text>
<g transform="translate(1162,209.5)"><path d="M.5 6v5.300c0 2.400 1.900 3.700 5 3.700s5-1.300 5-3.700v-5.300h-2.200v4.800c0 1.100-1.100 1.800-2.800 1.800s-2.800-.7-2.800-1.800v-4.800z" fill="#b9d7ee" stroke="#39414d" stroke-width=".8"/><rect x="3.200" y=".5" width="4.600" height="11" rx="2.300" fill="#dedede" stroke="#39414d" stroke-width=".9"/><path d="M5.500 2.500v7.500" stroke="#8a8a8a" stroke-width="1.200" stroke-dasharray="1.300 1.200"/><rect x="4.500" y="14.800" width="2" height="2.600" fill="#b9d7ee" stroke="#39414d" stroke-width=".6"/><rect x=".5" y="17" width="10" height="3.200" rx=".6" fill="#b9d7ee" stroke="#39414d" stroke-width=".8"/><path d="M.8 19.800h9.400" stroke="#2e3640" stroke-width="1.200"/><path d="M12 3.500c1.200 2 1.200 5.500 0 7.500M13.600 1c2.200 3.500 2.200 9 0 12" stroke="#8a9096" stroke-width=".8" fill="none"/></g>
<g transform="translate(1162,236.8)"><path d="M.5 6v5.300c0 2.400 1.900 3.700 5 3.700s5-1.300 5-3.700v-5.300h-2.200v4.800c0 1.100-1.100 1.800-2.800 1.800s-2.800-.7-2.800-1.800v-4.800z" fill="#b9d7ee" stroke="#39414d" stroke-width=".8"/><rect x="3.200" y=".5" width="4.600" height="11" rx="2.300" fill="#dedede" stroke="#39414d" stroke-width=".9"/><path d="M5.500 2.500v7.500" stroke="#8a8a8a" stroke-width="1.200" stroke-dasharray="1.300 1.200"/><rect x="4.500" y="14.800" width="2" height="2.600" fill="#b9d7ee" stroke="#39414d" stroke-width=".6"/><rect x=".5" y="17" width="10" height="3.200" rx=".6" fill="#b9d7ee" stroke="#39414d" stroke-width=".8"/><path d="M.8 19.800h9.400" stroke="#2e3640" stroke-width="1.200"/><path d="M.5 16L11.500.7" stroke="#ff0a0a" stroke-width="2.300"/></g>
<g transform="translate(916.9,369)"><ellipse cx="6.1" cy="22.9" rx="5.600" ry=".9" fill="#e4e0dc"/><path d="M.5 20.800v-4.300l2.900-3.300h5.400l2.900 3.300v4.300a1 1 0 0 1-1 1h-9.200a1 1 0 0 1-1-1z" fill="#5a9fe6" stroke="#2b62b3" stroke-width=".9"/><path d="M1.500 19.300h9.200" stroke="#8cc0f2" stroke-width="1.500"/><rect x="3.200" y="17.300" width="5.800" height="1.300" fill="#2f6db3"/><path d="M2.800 14.300q3.300 3.600 6.600 0" stroke="#fff" stroke-width="1.500" fill="none"/><ellipse cx="6.100" cy="9.700" rx="3.600" ry="4.800" fill="#dccdb4" stroke="#5c4e42" stroke-width=".9"/><ellipse cx="6.100" cy="6.600" rx="2" ry="1.400" fill="#fff" opacity=".85"/></g>
<text x="941.6" y="388.3" font-size="12.5" font-weight="normal" font-style="normal" fill="#000" textLength="77.8" lengthAdjust="spacingAndGlyphs"  stroke="#000" stroke-width="0.3">Akram Kohansal</text>
<g transform="translate(916.9,396.2)"><ellipse cx="6.1" cy="22.9" rx="5.600" ry=".9" fill="#e4e0dc"/><path d="M.5 20.800v-4.300l2.900-3.300h5.400l2.900 3.300v4.300a1 1 0 0 1-1 1h-9.200a1 1 0 0 1-1-1z" fill="#5a9fe6" stroke="#2b62b3" stroke-width=".9"/><path d="M1.500 19.300h9.200" stroke="#8cc0f2" stroke-width="1.500"/><rect x="3.200" y="17.300" width="5.800" height="1.300" fill="#2f6db3"/><path d="M2.800 14.300q3.300 3.600 6.600 0" stroke="#fff" stroke-width="1.500" fill="none"/><ellipse cx="6.100" cy="9.700" rx="3.600" ry="4.800" fill="#dccdb4" stroke="#5c4e42" stroke-width=".9"/><ellipse cx="6.100" cy="6.600" rx="2" ry="1.400" fill="#fff" opacity=".85"/></g>
<text x="941.6" y="415.3" font-size="12.5" font-weight="normal" font-style="normal" fill="#1672e0" textLength="59.9" lengthAdjust="spacingAndGlyphs"  stroke="#1672e0" stroke-width="0.3">Amirhoseiny</text>
<g transform="translate(916.9,423.3)"><ellipse cx="6.1" cy="22.9" rx="5.600" ry=".9" fill="#e4e0dc"/><path d="M.5 20.800v-4.300l2.900-3.300h5.400l2.900 3.300v4.300a1 1 0 0 1-1 1h-9.200a1 1 0 0 1-1-1z" fill="#5a9fe6" stroke="#2b62b3" stroke-width=".9"/><path d="M1.500 19.300h9.200" stroke="#8cc0f2" stroke-width="1.500"/><rect x="3.200" y="17.300" width="5.800" height="1.300" fill="#2f6db3"/><path d="M2.800 14.300q3.300 3.600 6.600 0" stroke="#fff" stroke-width="1.500" fill="none"/><ellipse cx="6.100" cy="9.700" rx="3.600" ry="4.800" fill="#dccdb4" stroke="#5c4e42" stroke-width=".9"/><ellipse cx="6.100" cy="6.600" rx="2" ry="1.400" fill="#fff" opacity=".85"/></g>
<text x="941.6" y="442.0" font-size="12.5" font-weight="normal" font-style="normal" fill="#1672e0" textLength="91.1" lengthAdjust="spacingAndGlyphs"  stroke="#1672e0" stroke-width="0.3">Amirreza Vakilifard</text>
<g transform="translate(916.9,450.5)"><ellipse cx="6.1" cy="22.9" rx="5.600" ry=".9" fill="#e4e0dc"/><path d="M.5 20.800v-4.300l2.900-3.300h5.400l2.900 3.300v4.300a1 1 0 0 1-1 1h-9.200a1 1 0 0 1-1-1z" fill="#5a9fe6" stroke="#2b62b3" stroke-width=".9"/><path d="M1.500 19.300h9.200" stroke="#8cc0f2" stroke-width="1.500"/><rect x="3.200" y="17.300" width="5.800" height="1.300" fill="#2f6db3"/><path d="M2.800 14.300q3.300 3.600 6.600 0" stroke="#fff" stroke-width="1.500" fill="none"/><ellipse cx="6.100" cy="9.700" rx="3.600" ry="4.800" fill="#dccdb4" stroke="#5c4e42" stroke-width=".9"/><ellipse cx="6.100" cy="6.600" rx="2" ry="1.400" fill="#fff" opacity=".85"/></g>
<text x="941.6" y="469.3" font-size="12.5" font-weight="normal" font-style="normal" fill="#1672e0" textLength="100.0" lengthAdjust="spacingAndGlyphs"  stroke="#1672e0" stroke-width="0.3">Amirreza Vakilifard 2</text>
<path d="M919.500 486c0-2.500 1.300-4 3.500-4s3.500 1.500 3.500 4z" fill="#f2ece2" stroke="#5c4e42" stroke-width=".9"/>
<text x="914.0" y="510.0" font-size="16" font-weight="normal" font-style="normal" fill="#333" textLength="27.0" lengthAdjust="spacingAndGlyphs"  stroke="#333" stroke-width="0.3">Chat</text>
<text x="950.5" y="509.6" font-size="12" font-weight="normal" font-style="normal" fill="#333" textLength="52.2" lengthAdjust="spacingAndGlyphs" >(Everyone)</text>
<path d="M1170 500.500h9M1170 503h9M1170 505.500h9M1170 508h9" stroke="#aaa" stroke-width="1"/><path d="M1180.500 502.500h5.500l-2.750 3.500z" fill="#aaa"/>
<text x="914.8" y="546.8" font-size="13" font-weight="normal" font-style="italic" fill="#3a3a3a" textLength="166.9" lengthAdjust="spacingAndGlyphs" >The chat history has been cleared</text>
<text x="914.3" y="573.4" font-size="13" font-weight="bold" font-style="normal" fill="#000" textLength="54.6" lengthAdjust="spacingAndGlyphs" >Feshalanj:</text><text x="972.7" y="573.4" font-size="13" font-weight="normal" font-style="normal" fill="#000" textLength="24.7" lengthAdjust="spacingAndGlyphs" >11:10</text><text x="1001.0" y="573.4" font-size="10.5" font-weight="normal" font-style="normal" fill="#000" textLength="22.2" lengthAdjust="spacingAndGlyphs" >شروع</text>
<text x="914.3" y="600.5" font-size="10.5" font-weight="bold" font-style="normal" fill="#000" textLength="68.7" lengthAdjust="spacingAndGlyphs" >ورستم یمحمد هاد</text><text x="985.5" y="600.5" font-size="13" font-weight="bold" font-style="normal" fill="#000" textLength="11.0" lengthAdjust="spacingAndGlyphs" >2:</text><text x="1000.0" y="600.5" font-size="10.5" font-weight="normal" font-style="normal" fill="#000" textLength="49.0" lengthAdjust="spacingAndGlyphs" >سلام و ارادت</text>
<text x="914.3" y="627.6" font-size="13" font-weight="bold" font-style="normal" fill="#000" textLength="88.7" lengthAdjust="spacingAndGlyphs" >Dr. M. Moeinifar:</text><text x="1006.0" y="627.6" font-size="10.5" font-weight="normal" font-style="normal" fill="#000" textLength="9.2" lengthAdjust="spacingAndGlyphs" >بله</text>
<text x="914.3" y="654.8" font-size="10.5" font-weight="bold" font-style="normal" fill="#000" textLength="57.0" lengthAdjust="spacingAndGlyphs" >:سید اکبر جلیلی</text><text x="974.2" y="654.8" font-size="10.5" font-weight="normal" font-style="normal" fill="#000" textLength="32.7" lengthAdjust="spacingAndGlyphs" >سلام. بله</text>
<text x="914.3" y="681.9" font-size="10.5" font-weight="bold" font-style="normal" fill="#000" textLength="90.2" lengthAdjust="spacingAndGlyphs" >:یدری‌دکتر محمد باقر ح</text><text x="1007.5" y="681.9" font-size="10.5" font-weight="normal" font-style="normal" fill="#000" textLength="9.8" lengthAdjust="spacingAndGlyphs" >بله</text>
<text x="914.3" y="709.0" font-size="10.5" font-weight="bold" font-style="normal" fill="#000" textLength="68.7" lengthAdjust="spacingAndGlyphs" >ورستم یمحمد هاد</text><text x="985.5" y="709.0" font-size="13" font-weight="bold" font-style="normal" fill="#000" textLength="11.0" lengthAdjust="spacingAndGlyphs" >2:</text><text x="1000.0" y="709.0" font-size="10.5" font-weight="normal" font-style="normal" fill="#000" textLength="77.6" lengthAdjust="spacingAndGlyphs" >بله کاملا واضح هست</text>
<text x="914.3" y="736.1" font-size="10.5" font-weight="bold" font-style="normal" fill="#000" textLength="72.4" lengthAdjust="spacingAndGlyphs" >:یعبدالرحمن رازان</text><text x="990.6" y="736.1" font-size="10" font-weight="normal" font-style="normal" fill="#000" textLength="5.0" lengthAdjust="spacingAndGlyphs" >+</text>
<text x="914.3" y="763.2" font-size="13" font-weight="bold" font-style="normal" fill="#000" textLength="90.5" lengthAdjust="spacingAndGlyphs" >Mohsen Alvandi:</text><text x="1007.8" y="763.2" font-size="10.5" font-weight="normal" font-style="normal" fill="#000" textLength="9.5" lengthAdjust="spacingAndGlyphs" >بله</text>
<text x="914.3" y="790.4" font-size="13" font-weight="bold" font-style="normal" fill="#000" textLength="87.5" lengthAdjust="spacingAndGlyphs" >Ramin Hosseini:</text><text x="1004.8" y="790.4" font-size="10.5" font-weight="normal" font-style="normal" fill="#000" textLength="9.5" lengthAdjust="spacingAndGlyphs" >بله</text>
<text x="914.3" y="817.5" font-size="13" font-weight="bold" font-style="normal" fill="#000" textLength="133.3" lengthAdjust="spacingAndGlyphs" >Mehdi Montazeri-Pour 2:</text><text x="1051.4" y="817.5" font-size="10.5" font-weight="normal" font-style="normal" fill="#000" textLength="37.7" lengthAdjust="spacingAndGlyphs" >سلام مجدد</text>
<text x="914.3" y="844.6" font-size="13" font-weight="bold" font-style="normal" fill="#000" textLength="73.9" lengthAdjust="spacingAndGlyphs" >Amirhoseiny:</text><text x="991.2" y="844.6" font-size="10.5" font-weight="normal" font-style="normal" fill="#000" textLength="8.8" lengthAdjust="spacingAndGlyphs" >بله</text>
<text x="914.3" y="871.7" font-size="13" font-weight="bold" font-style="normal" fill="#000" textLength="26.4" lengthAdjust="spacingAndGlyphs" >Miry:</text><text x="943.9" y="871.7" font-size="10.5" font-weight="normal" font-style="normal" fill="#000" textLength="9.5" lengthAdjust="spacingAndGlyphs" >بله</text>
<text x="914.3" y="898.8" font-size="13" font-weight="bold" font-style="normal" fill="#000" textLength="92.0" lengthAdjust="spacingAndGlyphs" >Akram Kohansal:</text><text x="1009.9" y="898.8" font-size="10.5" font-weight="normal" font-style="normal" fill="#000" textLength="66.1" lengthAdjust="spacingAndGlyphs" >سلام. وقت به خیر</text>
<text x="914.3" y="926.0" font-size="13" font-weight="bold" font-style="normal" fill="#000" textLength="57.8" lengthAdjust="spacingAndGlyphs" >Leila Alavi:</text><text x="975.7" y="926.0" font-size="10.5" font-weight="normal" font-style="normal" fill="#000" textLength="37.1" lengthAdjust="spacingAndGlyphs" >سلام مجدد</text>
</svg>
<!-- OVERLAY_RIGHT_END -->
<!-- OVERLAY_TOP_START -->
<svg class="abs" style="left:0;top:0;pointer-events:none;will-change:transform" width="1280" height="1079" viewBox="0 0 1280 1079" font-family="Liberation Sans, sans-serif">
<defs><linearGradient id="gb" x1="0" y1="0" x2="0" y2="1"><stop offset="0" stop-color="#454545"/><stop offset="1" stop-color="#2a2a2a"/></linearGradient><linearGradient id="gk" x1="0" y1="0" x2="0" y2="1"><stop offset="0" stop-color="#0c0c0c"/><stop offset="1" stop-color="#1f1f1f"/></linearGradient></defs>
<text x="22.0" y="19.0" font-size="14" font-weight="normal" font-style="normal" fill="#000" textLength="724.0" lengthAdjust="spacingAndGlyphs" direction="ltr">1402 دفتر برنامه ریزی آموزشی طرح دانش‌افزایی و توانمندسازی اعضای محترم هیأت علمی کارگاه آموزشی"کاربرد هوش مصنوعی در آموزش" 20 دی ماه</text>
<text x="749.0" y="19.0" font-size="14" font-weight="normal" font-style="normal" fill="#000" textLength="142.5" lengthAdjust="spacingAndGlyphs" >(Sharing) - Adobe Connect</text>
<path d="M1158 13.500h11" stroke="#111" stroke-width="1.2"/>
<rect x="1203.500" y="8.500" width="8" height="8" fill="none" stroke="#111" stroke-width="1.100"/><path d="M1205.500 8.500v-2h8v8h-2" fill="none" stroke="#111" stroke-width="1.100"/>
<path d="M1248.500 6.500l13 13M1261.500 6.500l-13 13" stroke="#111" stroke-width="1.3"/>
<path d="M23 31.500h14.200" stroke="#0c0c0c" stroke-width="1"/>
<path d="M23 32.200h2.600l-2.600 7z M30 32.200h7.200v19.300h-.700z M27.400 40.600l3.900 10.900h-2.100l-1.300-3.700h-3.400z" fill="#fff"/>
<path d="M17.800 26.500h5.200" stroke="#0c0c0c" stroke-width="1"/>
<path d="M17.800 27h5.200v4.200l-5.200 11.800z" fill="#fff"/>
<text x="18.0" y="51.8" font-size="7.5" font-weight="bold" font-style="italic" fill="#eee" textLength="5.0" lengthAdjust="spacingAndGlyphs" >A</text>
<text x="23.2" y="62.7" font-size="9.5" font-weight="bold" font-style="normal" fill="#fff" textLength="13.8" lengthAdjust="spacingAndGlyphs" >dobe</text>
<text x="75.7" y="52.8" font-size="15" font-weight="bold" font-style="normal" fill="#fff" textLength="51.0" lengthAdjust="spacingAndGlyphs" >Meeting</text>
<text x="152.2" y="52.8" font-size="15" font-weight="bold" font-style="normal" fill="#fff" textLength="49.7" lengthAdjust="spacingAndGlyphs" >Layouts</text>
<text x="227.6" y="52.8" font-size="15" font-weight="bold" font-style="normal" fill="#fff" textLength="30.0" lengthAdjust="spacingAndGlyphs" >Pods</text>
<text x="282.9" y="52.8" font-size="15" font-weight="bold" font-style="normal" fill="#fff" textLength="36.4" lengthAdjust="spacingAndGlyphs" >Audio</text>
<text x="1206.0" y="52.8" font-size="15" font-weight="bold" font-style="normal" fill="#fff" textLength="27.5" lengthAdjust="spacingAndGlyphs" >Help</text>
<path d="M343.500 36v22" stroke="#222" stroke-width="1"/><path d="M344.500 36v22" stroke="#505050" stroke-width="1"/>
<path d="M1182.500 36v22" stroke="#222" stroke-width="1"/><path d="M1183.500 36v22" stroke="#505050" stroke-width="1"/>
<rect x="360.5" y="34.500" width="50" height="27" rx="3" fill="url(#gb)" stroke="#1b1b1b"/><path d="M361.5 62.200h48" stroke="#555" stroke-width="1"/><path d="M363.5 35h30v26h-30a2.500 2.500 0 0 1-2.500-2.500v-21a2.500 2.500 0 0 1 2.500-2.500z" fill="url(#gk)"/><path d="M393.5 35v26" stroke="#191919"/><path d="M398.2 46h6.600l-3.300 4.500z" fill="#d4d4d4"/>
<rect x="426.5" y="34.500" width="50" height="27" rx="3" fill="url(#gb)" stroke="#1b1b1b"/><path d="M427.5 62.200h48" stroke="#555" stroke-width="1"/><path d="M429.5 35h30v26h-30a2.500 2.500 0 0 1-2.500-2.500v-21a2.500 2.500 0 0 1 2.500-2.500z" fill="url(#gk)"/><path d="M459.5 35v26" stroke="#191919"/><path d="M464.2 46h6.600l-3.300 4.500z" fill="#d4d4d4"/>
<rect x="492.5" y="34.500" width="50" height="27" rx="3" fill="url(#gb)" stroke="#1b1b1b"/><path d="M493.5 62.200h48" stroke="#555" stroke-width="1"/><path d="M525.5 35v26" stroke="#191919"/><path d="M530.2 46h6.600l-3.300 4.500z" fill="#d4d4d4"/>
<rect x="558.5" y="34.500" width="50" height="27" rx="3" fill="url(#gb)" stroke="#1b1b1b"/><path d="M559.5 62.200h48" stroke="#555" stroke-width="1"/><path d="M591.5 35v26" stroke="#191919"/><path d="M596.2 46h6.600l-3.300 4.500z" fill="#d4d4d4"/>
<g fill="#7ed321" stroke="none"><path d="M368 44.500h4l5-4.500v16l-5-4.500h-4z"/></g><path d="M379.500 44a5 5 0 0 1 0 8M382 41a9 9 0 0 1 0 14" stroke="#7ed321" stroke-width="1.700" fill="none"/>
<rect x="438.500" y="38.500" width="7" height="12" rx="3.500" fill="#7ed321"/><path d="M436 47.500c0 4 2.500 6 6 6s6-2 6-6" fill="none" stroke="#7ed321" stroke-width="1.500"/><path d="M442 53.500v3M438 57h8" stroke="#7ed321" stroke-width="1.800"/><path d="M436.500 55L448 39" stroke="#7ed321" stroke-width="1.500"/><path d="M437.700 55.800L449.200 39.800" stroke="#111" stroke-width="1"/>
<circle cx="508.500" cy="46" r="6.300" fill="#f2f2f2"/><circle cx="508.500" cy="46" r="3" fill="#333"/><circle cx="508.500" cy="46" r="1.500" fill="#f2f2f2"/><path d="M504 53h9l3 5h-15z" fill="#f2f2f2"/>
<circle cx="573.500" cy="44.500" r="3.200" fill="#f2f2f2"/><path d="M568.500 58v-7c0-2 1.500-3 3.500-3h3.500c1.500 0 2-1 2-2.500v-6.500h2.500v9c0 3-1 4.500-3 5v5z" fill="#f2f2f2"/><path d="M572.500 52v6" stroke="#333" stroke-width=".8"/>
<ellipse cx="1160" cy="48" rx="7" ry="7.500" fill="#e8262b"/>
<g fill="#1fae1f"><rect x="1256" y="55" width="2.600" height="4"/><rect x="1259.600" y="52" width="2.600" height="7"/><rect x="1263.200" y="48" width="2.600" height="11"/><rect x="1266.800" y="43" width="2.600" height="16"/><rect x="1270.400" y="38" width="2.600" height="21"/></g>
<path d="M23.500 86v13" stroke="#555" stroke-width="1.500"/>
<text x="29.0" y="98.2" font-size="15.5" font-weight="normal" font-style="normal" fill="#2e2e2e" textLength="239.0" lengthAdjust="spacingAndGlyphs" >in Education by Dr. Asghar Zajkani.pdf</text>
<rect x="597.5" y="80.500" width="53.0" height="28" rx="3" fill="#e9e9e9" stroke="#b3b3b3"/>
<text x="610.3" y="99.8" font-size="13.5" font-weight="normal" font-style="normal" fill="#9a9a9a" textLength="28.5" lengthAdjust="spacingAndGlyphs" >Draw</text>
<rect x="661.0" y="80.500" width="33.0" height="28" rx="3" fill="#e9e9e9" stroke="#b3b3b3"/>
<path d="M675.300 86.600l-3.900 5 6.300 7.800-2.400 2.400 9.400 3.100-.8-10.900-2.300 2.300z" fill="#ececec" stroke="#a0a0a0" stroke-width="1.200" stroke-linejoin="round"/><path d="M675.500 103.500l9 2.500" stroke="#b0b0b0" stroke-width="1.600"/>
<path d="M704.500 83v24" stroke="#9a9a9a" stroke-width="1.200"/>
<rect x="716.0" y="80.500" width="93.5" height="28" rx="3" fill="#e9e9e9" stroke="#b3b3b3"/>
<text x="728.8" y="99.8" font-size="13.5" font-weight="normal" font-style="normal" fill="#9a9a9a" textLength="69.6" lengthAdjust="spacingAndGlyphs" >Stop Sharing</text>
<g fill="#a6a6a6" stroke="#a6a6a6" stroke-width=".6" stroke-linejoin="round"><path d="M821 84.500h6.500l-2.100 2.100 2.500 2.500-2.300 2.300-2.500-2.500-2.100 2.100zM837 84.500v6.500l-2.100-2.100-2.500 2.500-2.300-2.300 2.500-2.500-2.100-2.100zM821 105.500v-6.500l2.100 2.100 2.500-2.500 2.300 2.300-2.500 2.500 2.100 2.100zM837 105.500h-6.500l2.100-2.100-2.500-2.500 2.300-2.300 2.500 2.500 2.100-2.100z"/></g>
<path d="M847.500 83v24" stroke="#9a9a9a" stroke-width="1.200"/>
<path d="M870.500 90h9M870.500 92.500h9M870.500 95h9M870.500 97.500h9" stroke="#a5a5a5" stroke-width="1"/><path d="M881 92h5.500l-2.750 3.500z" fill="#a5a5a5"/>
<path d="M1212 74.500h8.500M1212 76.700h8.500M1212 78.900h8.500M1212 81h8.500" stroke="#ddd" stroke-width="1"/><path d="M1221.500 77h5l-2.500 3z" fill="#ddd"/>
<path d="M1268.500 74.500l5.500 5.500M1274 74.500l-5.500 5.500" stroke="#ddd" stroke-width="2"/>
<rect x="1214" y="98" width="57.500" height="51.500" fill="#3a3a3a" stroke="#1a8cff" stroke-width="2.200"/>
<rect x="1216" y="101.500" width="53" height="4.500" fill="#2a2a2a"/><rect x="1262.500" y="102.700" width="2.500" height="2" fill="#e25b3c"/><rect x="1265.300" y="102.700" width="2.500" height="2" fill="#7bc043"/>
<rect x="1217.500" y="108" width="36.500" height="37" fill="#5c8bc4" stroke="#86b3e6" stroke-width="1"/>
<rect x="1256.700" y="108" width="10.500" height="14" fill="#5c8bc4" stroke="#7faadd" stroke-width=".8"/><rect x="1256.700" y="123.500" width="10.500" height="9.500" fill="#7db1ea"/><rect x="1256.700" y="134.500" width="10.500" height="10.500" fill="#5c8bc4" stroke="#7faadd" stroke-width=".8"/>
<text x="1216.7" y="169.4" font-size="13.5" font-weight="normal" font-style="normal" fill="#e8e8e8" textLength="39.7" lengthAdjust="spacingAndGlyphs" >Sharing</text>
<rect x="1215.500" y="190.5" width="54" height="47" fill="#3b3b3b" stroke="#585858" stroke-width="1"/><rect x="1216" y="191.0" width="53" height="5" fill="#2a2a2a"/><rect x="1262.500" y="192.5" width="2.500" height="1.800" fill="#e25b3c"/><rect x="1265.300" y="192.5" width="2.500" height="1.800" fill="#7bc043"/><path d="M1216 238.7h54" stroke="#222" stroke-width="1.500"/>
<rect x="1217.5" y="198.2" width="37.5" height="20" fill="#a9a9a9" stroke="#c6c6c6" stroke-width=".8"/><rect x="1257.5" y="198.2" width="9.7" height="20" fill="#a9a9a9" stroke="#c6c6c6" stroke-width=".8"/><rect x="1217.5" y="221.2" width="17.8" height="13.4" fill="#a9a9a9" stroke="#c6c6c6" stroke-width=".8"/><rect x="1237.3" y="221.2" width="17.7" height="13.4" fill="#a9a9a9" stroke="#c6c6c6" stroke-width=".8"/><rect x="1257.5" y="221.2" width="9.7" height="13.4" fill="#a9a9a9" stroke="#c6c6c6" stroke-width=".8"/>
<text x="1217.2" y="259.0" font-size="13.5" font-weight="normal" font-style="normal" fill="#e8e8e8" textLength="53.6" lengthAdjust="spacingAndGlyphs" >Discussion</text>
<rect x="1215.500" y="280" width="54" height="48" fill="#3b3b3b" stroke="#585858" stroke-width="1"/><rect x="1216" y="280.5" width="53" height="5" fill="#2a2a2a"/><rect x="1262.500" y="282" width="2.500" height="1.800" fill="#e25b3c"/><rect x="1265.300" y="282" width="2.500" height="1.800" fill="#7bc043"/><path d="M1216 329.2h54" stroke="#222" stroke-width="1.500"/>
<rect x="1217.5" y="287" width="36.7" height="25.5" fill="#a9a9a9" stroke="#c6c6c6" stroke-width=".8"/><rect x="1257.5" y="287" width="9.7" height="10.4" fill="#a9a9a9" stroke="#c6c6c6" stroke-width=".8"/><rect x="1257.5" y="300.8" width="9.7" height="11" fill="#a9a9a9" stroke="#c6c6c6" stroke-width=".8"/><rect x="1217.5" y="315.4" width="17.8" height="9.5" fill="#a9a9a9" stroke="#c6c6c6" stroke-width=".8"/><rect x="1237.3" y="315.4" width="17" height="9.5" fill="#a9a9a9" stroke="#c6c6c6" stroke-width=".8"/><rect x="1257.5" y="315.4" width="9.7" height="9.5" fill="#a9a9a9" stroke="#c6c6c6" stroke-width=".8"/>
<text x="1216.7" y="349.4" font-size="13.5" font-weight="normal" font-style="normal" fill="#e8e8e8" textLength="45.8" lengthAdjust="spacingAndGlyphs" >Collabo...</text>
</svg>
<!-- OVERLAY_TOP_END -->
<!-- TASKBAR -->
<div id="taskbar"></div>
<div id="search"></div>

<!-- OVERLAY_TASK_START -->
<svg class="abs" style="left:0;top:0;pointer-events:none;will-change:transform" width="1280" height="1079" viewBox="0 0 1280 1079" font-family="Liberation Sans, sans-serif">
<path d="M16.300 998l6.700-.95v6.500h-6.700zM24 996.900l8.300-1.200v7.850h-8.300zM16.300 1004.500h6.700v6.500l-6.700-.95zM24 1004.500h8.300v7.800l-8.300-1.200z" fill="#fff"/>
<circle cx="70.900" cy="1001" r="4.700" fill="none" stroke="#222" stroke-width="1.300"/><path d="M67.500 1004.400l-7 6.800" stroke="#222" stroke-width="1.400"/>
<text x="88.4" y="1010.2" font-size="15.5" font-weight="normal" font-style="normal" fill="#333" textLength="127.2" lengthAdjust="spacingAndGlyphs" >Type here to search</text>
<circle cx="415.600" cy="1004" r="6.600" fill="none" stroke="#fff" stroke-width="2"/>
<g fill="none" stroke="#fff" stroke-width="1.200"><rect x="458.600" y="999.600" width="8.500" height="8"/><path d="M456.500 997v2M456.500 1008.500v2.500M456.500 997h12.500M456.500 1011h12.500M469 997v2M469 1008.500v2.500"/><path d="M471 999v2.500M471 1003v5" stroke-width="1.500"/></g>
<path d="M504 996.500c0-1 .5-1.500 1.500-1.500h6l2 2h10.500c1 0 1.500.5 1.500 1.500v12.500h-21.500z" fill="#e9a825"/><rect x="504" y="999" width="21.500" height="12.500" rx="1" fill="#fcd462"/><path d="M504 1005.500h21.500v6h-21.500z" fill="#f5c13d"/><path d="M509 1006h11.500v6.500h-2.500v-3.500h-6.500v3.500h-2.500z" fill="#3a8ee6"/>
<rect x="495.4" y="1021.500" width="39.5" height="2.500" fill="#76b9ed"/>
<rect x="559" y="994.500" width="15.500" height="19" rx="1" fill="#fff"/><path d="M566 998h7M566 1001h7M566 1004h7M566 1007h7M566 1010h7" stroke="#2b5eb0" stroke-width="1.300"/><path d="M552.500 995l12-2.300v22.500l-12-2.200z" fill="#2a5699"/>
<text x="554.3" y="1008.3" font-size="9.5" font-weight="bold" font-style="normal" fill="#fff" textLength="8.7" lengthAdjust="spacingAndGlyphs" >W</text>
<rect x="543.8" y="1021.500" width="40.2" height="2.500" fill="#76b9ed"/>
<defs><radialGradient id="ff" cx=".6" cy=".25" r=".9"><stop offset="0" stop-color="#ffe14a"/><stop offset=".35" stop-color="#ff9a1f"/><stop offset=".7" stop-color="#ff3c4a"/><stop offset="1" stop-color="#d81b8c"/></radialGradient><radialGradient id="ffi" cx=".5" cy=".4" r=".6"><stop offset="0" stop-color="#9a5cf0"/><stop offset="1" stop-color="#5b2bb8"/></radialGradient></defs>
<path d="M612.600 992.500c2 0 3.500 1 4.500 2 .3-1.500 1.200-2.800 2.300-3.500 0 2.500 1.500 4 3 6 1.500 2 2.200 4.500 2.200 7 0 6.600-5.400 12-12 12s-12-5.400-12-12c0-3 1-5.500 2.500-7.500 0 1.200.3 2 .8 2.700.5-2.700 2.200-5 4.700-6.700-.3 1 0 2 .5 2.700 1-1.500 2.200-2.300 3.500-2.700z" fill="url(#ff)"/><circle cx="611.800" cy="1004.500" r="6" fill="url(#ffi)"/><path d="M606 1003c2-2.500 6-3.500 9-1.500 2 1.500 2.500 4 1.500 6 3-1 4.500-4.500 3-8-1.500-3-5-4.500-8.500-3.500-2.500.7-4.500 3-5 7z" fill="#ff8a1c" opacity=".9"/>
<circle cx="662.100" cy="1004" r="12" fill="#fff"/><path d="M662.100 1004L651.700 998a12 12 0 0 1 20.800 0z" fill="#ea4335"/><path d="M662.100 992a12 12 0 0 1 10.400 6h-10.400z" fill="#ea4335"/><path d="M651.700 998a12 12 0 0 0 10.400 18l5.200-9-5.200-3z" fill="#34a853"/><path d="M672.500 998a12 12 0 0 1-10.400 18l5.200-9-5.200-9z" fill="#fbbc05"/><path d="M651.700 998l5.200 9 5.200-3z" fill="#ea4335"/><circle cx="662.100" cy="1004" r="5.500" fill="#fff"/><circle cx="662.100" cy="1004" r="4.300" fill="#4285f4"/>
<rect x="641.8" y="1021.500" width="40.2" height="2.500" fill="#76b9ed"/>
<path d="M720.500 1004.700c0-5.200-4-9.200-9-9.200-4.500 0-8.300 3.300-9 7.800 2-3 4.500-4.500 6.500-5-2.500 2-3.800 4-4 5.700h11.300c0-2.500-1.800-4.300-4.300-4.300 5 0 5.500 4 5.500 6h-12.700c.3 2.500 2.200 4.200 4.700 4.200 1.700 0 3.200-.9 4-2.300h3.800c-1.200 3.500-4.300 5.900-7.900 5.900-2 0-3.500-.6-4.800-1.500-2 1-3.500.8-4-.2-.8-1.500.5-4.500 2-7-1 3-.8 5 .2 5.500" fill="#1ea5e9"/><ellipse cx="711.300" cy="1004.500" rx="8.800" ry="8.500" fill="none" stroke="#1ea5e9" stroke-width="3"/><rect x="703" y="1003" width="17" height="3" fill="#1ea5e9"/><rect x="714" y="1006" width="8" height="3.500" fill="#1e1e1e"/><path d="M699.500 1013c-1.500-3 2-9 8-13.500s11-5 13-3.500c1 1 .7 3-.5 5" fill="none" stroke="#f0b323" stroke-width="1.600"/>
<rect x="736" y="984" width="48" height="40" fill="#484848"/>
<rect x="749" y="993" width="21.500" height="20.500" fill="#2fae86"/><rect x="751" y="995" width="17.500" height="16.500" fill="#0d3127"/><path d="M755 999l9.500 8.500M764.500 999l-9.500 8.500" stroke="#8ee6c2" stroke-width="1.500"/><circle cx="755" cy="999.500" r="1.600" fill="#8ee6c2"/><circle cx="764.500" cy="999.500" r="1.600" fill="#8ee6c2"/><circle cx="759.700" cy="1003.300" r="1.400" fill="#0d3127"/>
<rect x="736.0" y="1021.500" width="48.0" height="2.500" fill="#76b9ed"/>
<path d="M797.500 1006c0-6 5-10.500 11-10.500 5 0 9 3 9 7 0 3-2 4.500-4.500 4.500h-2c-1.500 0-2.200 1-1.700 2.200.6 1.500 0 3.300-2.300 3.300-5.500 0-9.500-2.500-9.500-6.500z" fill="#e8eef5" stroke="#9fb3c8" stroke-width=".8"/><circle cx="802" cy="1003" r="1.800" fill="#e23b2e"/><circle cx="806" cy="999.500" r="1.800" fill="#f2b21b"/><circle cx="811" cy="999.500" r="1.800" fill="#3aa34a"/><circle cx="802.500" cy="1008" r="1.800" fill="#2f7de0"/><path d="M810 1010l8.500-15 1.700 1-7.700 15.200z" fill="#d98c3a"/><path d="M818.500 995l1.200-2.500 1.500.8-1 2.700z" fill="#c33"/>
<rect x="788.6" y="1021.500" width="40.2" height="2.500" fill="#76b9ed"/>
<g fill="none" stroke="#fff" stroke-width="1.200"><circle cx="1010.300" cy="998.300" r="2.700"/><path d="M1006 1006.500c0-3 2-4.500 4.300-4.500s4.300 1.500 4.300 4.500"/><circle cx="1003.800" cy="1003" r="2.500"/><path d="M1000 1011c0-3 1.700-4.500 3.800-4.500s3.800 1.500 3.800 4.500"/></g>
<path d="M1037.300 1006.800l5.700-5.800 5.700 5.800" fill="none" stroke="#fff" stroke-width="1.300"/>
<g fill="none" stroke="#fff" stroke-width="1.200"><rect x="1062.500" y="998.500" width="12" height="8.500"/><path d="M1068.500 1007v3M1064.500 1010.300h8"/><rect x="1059.500" y="998" width="3.500" height="4.500" fill="#1e1e1e"/><path d="M1061.200 1002.500v7.800h3"/></g>
<rect x="1087.500" y="996" width="6" height="10" rx="3" fill="#fff"/><path d="M1085.500 1003.500c0 3.200 2 5 5 5s5-1.800 5-5M1090.500 1008.500v3M1087.500 1011.500h6" fill="none" stroke="#fff" stroke-width="1.200"/>
<path d="M1107 1001.500h2.800l3.700-3.500v11.500l-3.700-3.500h-2.800z" fill="none" stroke="#fff" stroke-width="1.100" stroke-linejoin="round"/><path d="M1115.800 1001.300a3.500 3.500 0 0 1 0 5M1118 999.200a6.500 6.500 0 0 1 0 9.200M1120.300 997.200a9.500 9.500 0 0 1 0 13.200" fill="none" stroke="#fff" stroke-width="1.100"/>
<text x="1133.5" y="1007.8" font-size="12" font-weight="normal" font-style="normal" fill="#fff" textLength="22.3" lengthAdjust="spacingAndGlyphs" >ENG</text>
<text x="1170.5" y="998.8" font-size="12" font-weight="normal" font-style="normal" fill="#fff" textLength="48.5" lengthAdjust="spacingAndGlyphs" >11:14 AM</text>
<text x="1169.8" y="1017.1" font-size="12" font-weight="normal" font-style="normal" fill="#fff" textLength="51.1" lengthAdjust="spacingAndGlyphs" >1/10/2024</text>
<rect x="1227" y="984" width="40" height="40" fill="#2d2d2d"/>
<path d="M1239 996h15.500v11h-8.500l-3.500 3.500v-3.500h-3.500z" fill="#fff"/><path d="M1241.500 999h10.500M1241.500 1001.500h10.500M1241.500 1004h10.500" stroke="#2d2d2d" stroke-width="1"/>
<circle cx="1254.700" cy="1011.200" r="7.600" fill="#333" stroke="#8a8a8a" stroke-width="1"/>
<text x="1251.5" y="1015.6" font-size="12" font-weight="bold" font-style="normal" fill="#fff" textLength="6.5" lengthAdjust="spacingAndGlyphs" >2</text>
<path d="M1275.500 984v40" stroke="#5a5a5a" stroke-width="1"/>
</svg>
<!-- OVERLAY_TASK_END -->
</div>
</body>
</html>
